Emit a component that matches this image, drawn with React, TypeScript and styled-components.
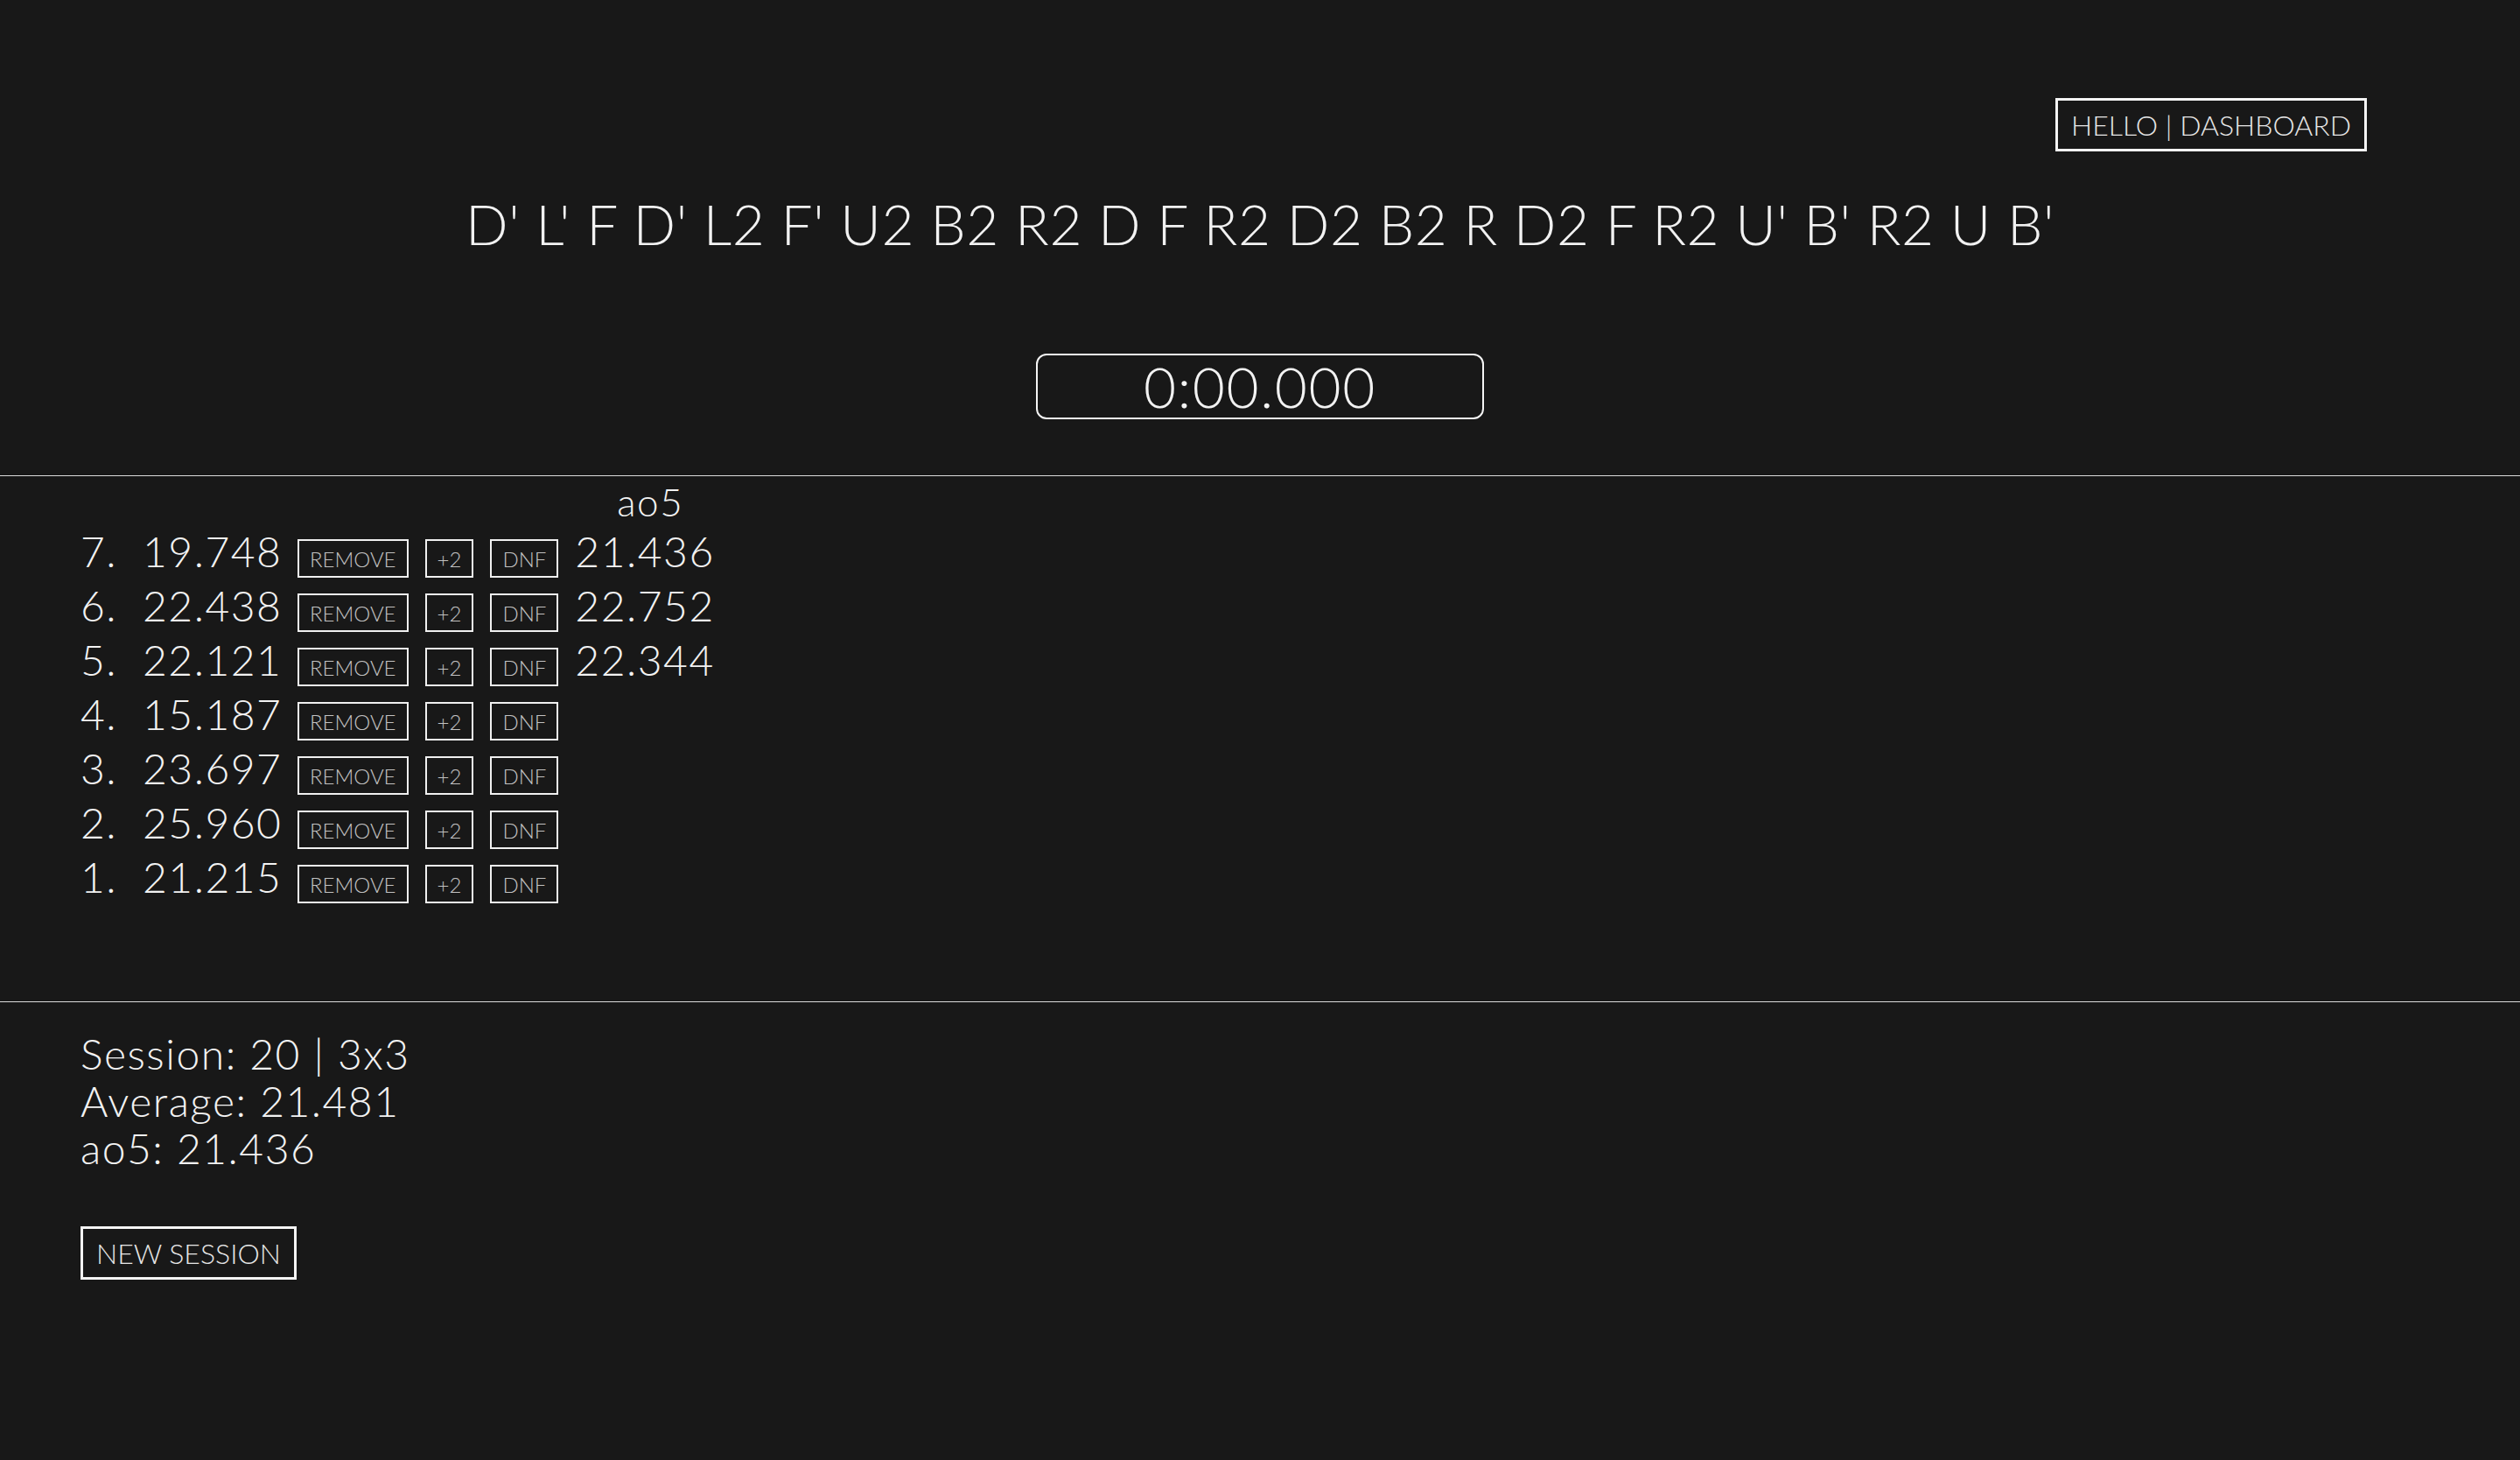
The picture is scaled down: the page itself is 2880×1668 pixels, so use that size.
import styled, { createGlobalStyle } from "styled-components";

const GlobalStyle = createGlobalStyle`
  html,
  body {
    margin: 0;
    padding: 0;
    background: #181818;
  }
  body {
    font-family: Lato, "Liberation Sans", sans-serif;
    font-weight: 300;
    color: #f2f2f2;
  }
`;

const Page = styled.div`
  min-height: 1668px;
  background: #181818;
`;

const TopBar = styled.header`
  display: flex;
  justify-content: flex-end;
  padding: 112px 175px 0 0;
`;

const OutlineButton = styled.button`
  font-family: Lato, "Liberation Sans", sans-serif;
  font-weight: 300;
  font-size: 32px;
  line-height: 39px;
  color: #e6e6e6;
  background: transparent;
  border: 3px solid #f4f4f4;
  padding: 8px 15px;
  cursor: pointer;
`;

const Scramble = styled.div`
  margin-top: 44px;
  text-align: center;
  font-size: 64px;
  line-height: 77px;
  letter-spacing: 0.6px;
`;

const TimerBox = styled.div`
  width: 508px;
  margin: 110px auto 0;
  border: 2px solid #f4f4f4;
  border-radius: 12px;
  text-align: center;
  font-size: 64px;
  line-height: 71px;
  letter-spacing: 1.6px;
`;

const TimesSection = styled.section`
  margin-top: 64px;
  height: 602px;
  border-top: 1px solid #dcdcdc;
  border-bottom: 1px solid #dcdcdc;
  padding: 3px 0 0 92px;
  box-sizing: border-box;
`;

const TimesGrid = styled.div`
  display: grid;
  grid-template-columns: 52px 158px auto auto auto auto;
  column-gap: 19px;
  justify-content: start;
  align-items: baseline;
`;

const AoHeader = styled.div`
  grid-column: 6;
  font-size: 44px;
  line-height: 52px;
  letter-spacing: 1.5px;
  padding-left: 48px;
`;

const Cell = styled.span`
  font-size: 48px;
  line-height: 62px;
  letter-spacing: 1.5px;
  white-space: nowrap;
`;

const SmallButton = styled.button`
  font-family: Lato, "Liberation Sans", sans-serif;
  font-weight: 300;
  font-size: 24px;
  line-height: 28px;
  color: #c2c2c2;
  background: transparent;
  border: 2px solid #f0f0f0;
  padding: 7px 12px 5px;
  cursor: pointer;
  justify-self: start;
`;

const Stats = styled.div`
  padding: 32px 0 0 92px;
`;

const StatLine = styled.div`
  font-size: 48px;
  line-height: 54px;
  letter-spacing: 1.5px;
`;

const NewSessionRow = styled.div`
  margin-top: 62px;
`;

type Solve = { n: number; time: string; ao5?: string };

const solves: Solve[] = [
  { n: 7, time: "19.748", ao5: "21.436" },
  { n: 6, time: "22.438", ao5: "22.752" },
  { n: 5, time: "22.121", ao5: "22.344" },
  { n: 4, time: "15.187" },
  { n: 3, time: "23.697" },
  { n: 2, time: "25.960" },
  { n: 1, time: "21.215" },
];

const scramble = "D' L' F D' L2 F' U2 B2 R2 D F R2 D2 B2 R D2 F R2 U' B' R2 U B'";

const App = () => {
  return (
    <Page>
      <GlobalStyle />
      <TopBar>
        <OutlineButton>HELLO | DASHBOARD</OutlineButton>
      </TopBar>
      <Scramble>{scramble}</Scramble>
      <TimerBox>0:00.000</TimerBox>
      <TimesSection>
        <TimesGrid>
          <AoHeader>ao5</AoHeader>
          {solves.map((s) => (
            <>
              <Cell key={`n${s.n}`}>{s.n}.</Cell>
              <Cell key={`t${s.n}`}>{s.time}</Cell>
              <SmallButton key={`r${s.n}`}>REMOVE</SmallButton>
              <SmallButton key={`p${s.n}`}>+2</SmallButton>
              <SmallButton key={`d${s.n}`}>DNF</SmallButton>
              <Cell key={`a${s.n}`}>{s.ao5 ?? ""}</Cell>
            </>
          ))}
        </TimesGrid>
      </TimesSection>
      <Stats>
        <StatLine>Session: 20 | 3x3</StatLine>
        <StatLine>Average: 21.481</StatLine>
        <StatLine>ao5: 21.436</StatLine>
        <NewSessionRow>
          <OutlineButton>NEW SESSION</OutlineButton>
        </NewSessionRow>
      </Stats>
    </Page>
  );
};

export default App;
